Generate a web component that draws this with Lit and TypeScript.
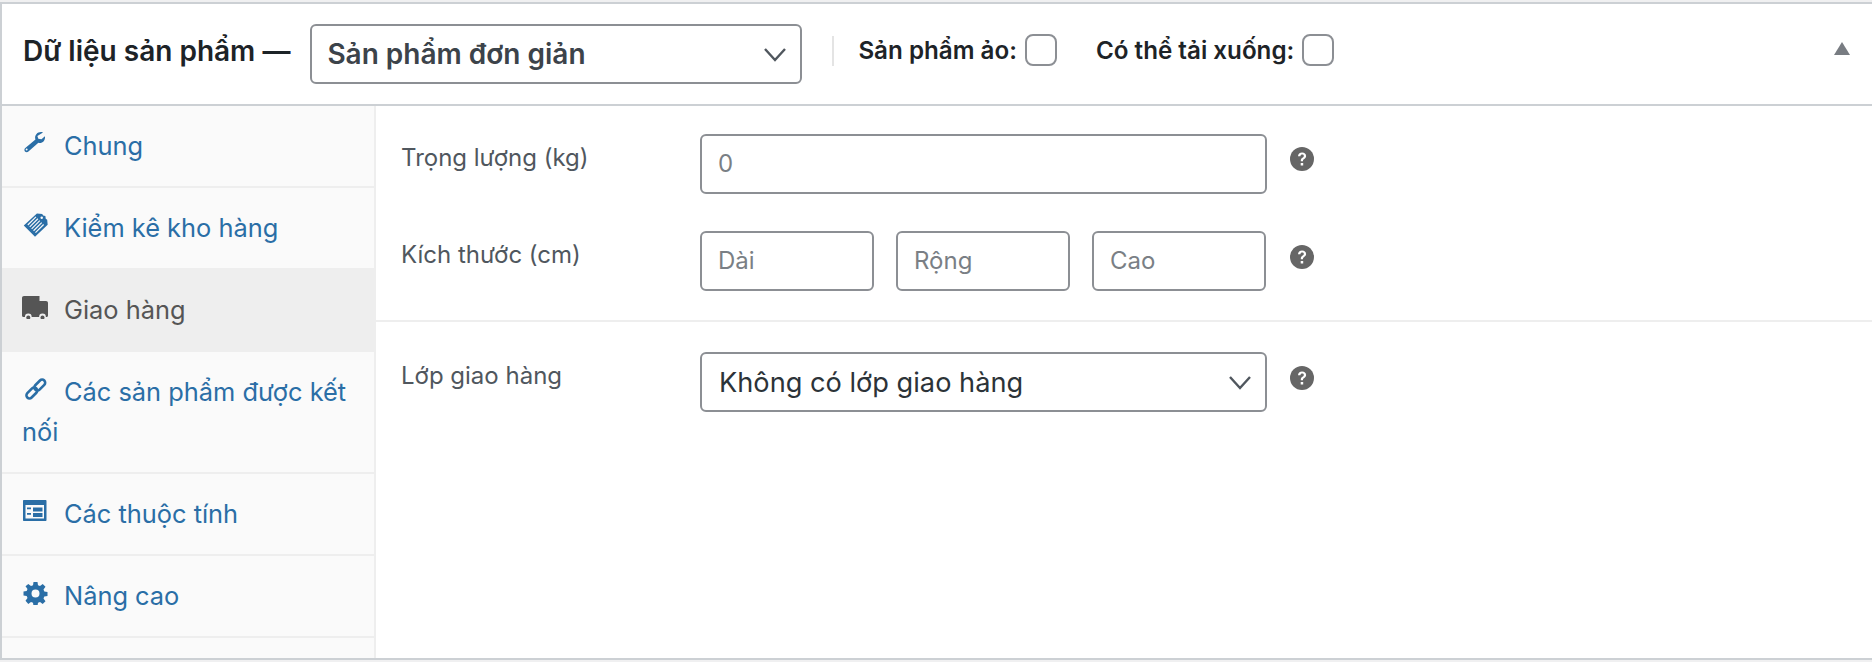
import { LitElement, html, css, svg, unsafeCSS } from "lit";
import { customElement } from "lit/decorators.js";

const icons: Record<string, unknown> = {
  wrench: svg`<path d="M21.500 0.600c-2.600-.9-5.600-.2-7.300 1.800-1.500 1.700-2 4-1.200 6.100L1.600 18.200c-1.200 1-1.400 2.700-.4 3.800 1 1.100 2.700 1.200 3.900.2l11.200-10c2.200.6 4.500-.1 6-1.800 1.300-1.500 1.800-3.500 1.300-5.400l-3.800 3.400-3.600-.6-1-3.300zM3.100 20.900a1.100 1.100 0 1 1 0-2.200 1.100 1.100 0 0 1 0 2.200z" fill-rule="evenodd"/>`,
  tag: svg`<path d="M0.300 13L14 .4l5.500.6 1 1.500 2.300.6.400 2.900 1.500 1 .5 5.200L12 24.800z"/>
    <g stroke="#fafafa" stroke-width="1.200" fill="none">
      <path d="M4.500 12.500L13 4M6.500 14.500L15 6M8.500 16.500L17 8M10.500 18.500L19 10M12.500 20.500L21 12"/>
    </g>
    <circle cx="19" cy="5" r="1.300" fill="#fafafa"/>`,
  truck: svg`<path d="M2 0h15.500v5H24c1.200 0 2 .8 2 2v12.500c0 .8-.6 1.500-1.400 1.500h-.7a3.400 3.400 0 0 0-6.800 0H9.700a3.400 3.400 0 0 0-6.800 0H1.400C.6 21 0 20.300 0 19.500V2C0 .8.800 0 2 0z"/><circle cx="6.300" cy="21.500" r="2"/><circle cx="20.500" cy="21.500" r="2"/>`,
  link: svg`<g fill="none" stroke="currentColor" stroke-width="3.200" transform="rotate(-45 12 12)">
    <rect x="-3" y="8.200" width="16" height="7.600" rx="3.800"/>
    <rect x="11" y="8.200" width="16" height="7.600" rx="3.800"/>
  </g>`,
  attrs: svg`<path fill-rule="evenodd" d="M1 0h21.500c.6 0 1 .4 1 1v19c0 .6-.4 1-1 1H1c-.6 0-1-.4-1-1V1c0-.6.4-1 1-1zM2.500 5v13.500h18.500V5zM4 7.500h4v1.800H4zM4 13h4v1.800H4zM10 7.500h9.500v4H10zM10 13h9.500v4H10z"/>`,
  gear: svg`<path fill-rule="evenodd" d="M9.500 0h4l.5 3.200 2 .8L18.700 2l2.800 2.800-2 2.700.8 2 3.200.5v4l-3.200.5-.8 2 2 2.700-2.800 2.800-2.700-2-2 .8-.5 3.200h-4l-.5-3.200-2-.8-2.700 2L1.500 18.700l2-2.700-.8-2L-.5 13.500v-4l3.200-.5.800-2-2-2.700L4.300 2 7 4l2-.8zM11.500 7.500a4 4 0 1 0 0 8 4 4 0 0 0 0-8z"/>`,
};

const iconBoxes: Record<string, string> = {
  wrench: "-2 -1 29 27",
  tag: "-1 0 26 25",
  truck: "0 -1 26 24",
  link: "-4 -3 30 30",
  attrs: "-1 -1 26 24",
  gear: "-2 -1 26 24",
};

const tabs = [
  { id: "wrench", label: "Chung" },
  { id: "tag", label: "Kiểm kê kho hàng" },
  { id: "truck", label: "Giao hàng", active: true },
  { id: "link", label: "Các sản phẩm được kết nối" },
  { id: "attrs", label: "Các thuộc tính" },
  { id: "gear", label: "Nâng cao" },
];

const chevron = unsafeCSS(
  "data:image/svg+xml;utf8,<svg xmlns='http://www.w3.org/2000/svg' width='24' height='15' viewBox='0 0 24 15'><path d='M2 2l10 11 10-11' fill='none' stroke='%2350575e' stroke-width='2.400'/></svg>"
);

const help = html`<svg class="help" viewBox="0 0 24 24" aria-hidden="true">
  <circle cx="12" cy="12" r="12" fill="#666"></circle>
  <path d="M8 9.300c0-2.400 1.700-3.800 4.100-3.800 2.300 0 4 1.300 4 3.400 0 1.500-.8 2.300-1.900 3-.9.600-1.200 1-1.200 1.900v.5h-2.200v-.8c0-1.400.5-2.100 1.600-2.800.9-.6 1.400-1 1.400-1.800 0-.8-.6-1.300-1.600-1.300-1.100 0-1.700.7-1.800 1.700zM10.700 16h2.500v2.500h-2.500z" fill="#fff"></path>
</svg>`;

@customElement("app-root")
export class AppRoot extends LitElement {
  static styles = css`
    :host {
      display: block;
      height: 662px;
      padding-top: 2px;
      box-sizing: border-box;
      font-family: Inter, "Noto Sans", sans-serif;
      color: #50575e;
      background: #f0f0f1;
      overflow: hidden;
    }
    .panel {
      height: 658px;
      box-sizing: border-box;
      border-top: 2px solid #ccd0d4;
      border-left: 2px solid #ccd0d4;
      border-bottom: 2px solid #ccd0d4;
      background: #fff;
      display: flex;
      flex-direction: column;
    }
    .head {
      height: 102px;
      flex: none;
      box-sizing: border-box;
      border-bottom: 2px solid #ccd0d4;
      display: flex;
      align-items: center;
      padding-left: 21px;
      padding-right: 22px;
      color: #1d2327;
    }
    .title {
      font-size: 28px;
      font-weight: 600;
      white-space: nowrap;
      margin-right: 20px;
      position: relative;
      top: -3px;
    }
    select {
      appearance: none;
      -webkit-appearance: none;
      font-family: inherit;
      box-sizing: border-box;
      border: 2px solid #8c8f94;
      border-radius: 6px;
      background: #fff url("${chevron}") no-repeat right 13px center;
      padding: 0 40px 0 15px;
      color: #2c3338;
      outline: none;
      margin: 0;
    }
    .type {
      width: 492px;
      height: 60px;
      font-size: 28px;
      font-weight: 600;
      color: #3c434a;
    }
    .sep {
      width: 2px;
      height: 30px;
      background: #e4e4e4;
      margin-left: 30px;
      margin-right: 24px;
      position: relative;
      top: -3px;
    }
    .check {
      display: flex;
      align-items: center;
      font-size: 24.200px;
      font-weight: 600;
      color: #1d2327;
      margin-right: 39px;
      white-space: nowrap;
      position: relative;
      top: -4px;
    }
    .check input {
      appearance: none;
      -webkit-appearance: none;
      width: 32px;
      height: 32px;
      box-sizing: border-box;
      border: 2px solid #8c8f94;
      border-radius: 8px;
      margin: 0 0 0 8px;
      background: #fff;
    }
    .collapse {
      margin-left: auto;
      width: 0;
      height: 0;
      border-left: 8.500px solid transparent;
      border-right: 8.500px solid transparent;
      border-bottom: 13px solid #787c82;
      position: relative;
      top: -6px;
    }
    .body {
      flex: 1;
      display: flex;
      min-height: 0;
    }
    .tabs {
      list-style: none;
      margin: 0;
      padding: 0;
      width: 374px;
      flex: none;
      box-sizing: border-box;
      background: #fafafa;
      border-right: 2px solid #eee;
    }
    .tabs li {
      border-bottom: 2px solid #eee;
    }
    .tabs li a {
      display: block;
      padding: 20px 20px;
      line-height: 40px;
      font-size: 25.400px;
      color: #2a6ea6;
      text-decoration: none;
    }
    .tabs li.active {
      border-bottom: 0;
      background: #eee;
      margin-top: -2px;
      margin-right: -2px;
      position: relative;
    }
    .tabs li.active a {
      color: #555;
      padding-top: 22px;
      padding-bottom: 22px;
    }
    .tabs svg {
      display: inline-block;
      width: 26px;
      height: 24px;
      margin-right: 16px;
      vertical-align: baseline;
      fill: currentColor;
    }
    .main {
      flex: 1;
      min-width: 0;
    }
    .group {
      padding: 28px 0 29px;
      border-bottom: 2px solid #eee;
      display: flex;
      flex-direction: column;
      gap: 37px;
    }
    .group.last {
      border-bottom: 0;
      padding-top: 30px;
    }
    .row {
      display: flex;
      align-items: flex-start;
    }
    .row label {
      width: 299px;
      flex: none;
      margin-left: 25px;
      font-size: 24px;
      line-height: 48px;
      color: #50575e;
    }
    input.text {
      box-sizing: border-box;
      height: 60px;
      border: 2px solid #8c8f94;
      border-radius: 6px;
      padding: 0 16px 2px;
      font: inherit;
      font-size: 24px;
      color: #50575e;
      outline: none;
      margin: 0;
      background: #fff;
    }
    input.text::placeholder {
      color: #7a7f85;
      opacity: 1;
    }
    input.full {
      width: 567px;
    }
    .dims {
      display: flex;
      gap: 22px;
    }
    .dims input {
      width: 174px;
    }
    .wide {
      width: 567px;
      height: 60px;
      font-size: 27.200px;
      padding-left: 17px;
      color: #2c3338;
    }
    .help {
      width: 24px;
      height: 24px;
      margin-left: 23px;
      margin-top: 13px;
      flex: none;
    }
    .dims + .help {
      margin-left: 24px;
      margin-top: 14px;
    }
    .wide + .help {
      margin-top: 14px;
    }
  `;

  render() {
    return html`
      <div class="panel">
        <div class="head">
          <span class="title">Dữ liệu sản phẩm —</span>
          <select class="type"><option>Sản phẩm đơn giản</option></select>
          <span class="sep"></span>
          <label class="check">Sản phẩm ảo:<input type="checkbox" /></label>
          <label class="check">Có thể tải xuống:<input type="checkbox" /></label>
          <span class="collapse"></span>
        </div>
        <div class="body">
          <ul class="tabs">
            ${tabs.map(
              (t) => html`<li class=${t.active ? "active" : ""}>
                <a href="#"><svg viewBox=${iconBoxes[t.id]} aria-hidden="true">${icons[t.id]}</svg>${t.label}</a>
              </li>`
            )}
          </ul>
          <div class="main">
            <div class="group">
              <div class="row">
                <label>Trọng lượng (kg)</label>
                <input class="text full" placeholder="0" />
                ${help}
              </div>
              <div class="row">
                <label>Kích thước (cm)</label>
                <div class="dims">
                  <input class="text" placeholder="Dài" />
                  <input class="text" placeholder="Rộng" />
                  <input class="text" placeholder="Cao" />
                </div>
                ${help}
              </div>
            </div>
            <div class="group last">
              <div class="row">
                <label>Lớp giao hàng</label>
                <select class="wide"><option>Không có lớp giao hàng</option></select>
                ${help}
              </div>
            </div>
          </div>
        </div>
      </div>
    `;
  }
}
